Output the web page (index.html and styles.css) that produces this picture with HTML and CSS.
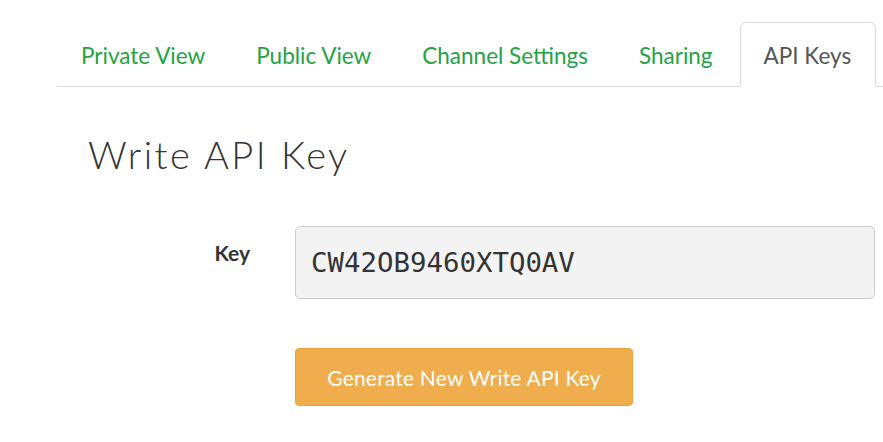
FILE: index.html
```html
<!DOCTYPE html>
<html>
<head>
<meta charset="utf-8">
<link rel="stylesheet" href="styles.css">
</head>
<body>
<div class="page">
  <ul class="tabs">
    <li class="tab"><a href="#">Private View</a></li>
    <li class="tab"><a href="#">Public View</a></li>
    <li class="tab"><a href="#">Channel Settings</a></li>
    <li class="tab"><a href="#">Sharing</a></li>
    <li class="tab active"><a href="#">API Keys</a></li>
  </ul>
  <div class="content">
    <h1 class="title">Write API Key</h1>
    <div class="row">
      <label class="label">Key</label>
      <div class="field">CW42OB9460XTQ0AV</div>
    </div>
    <div class="actions">
      <button class="btn">Generate New Write API Key</button>
    </div>
  </div>
</div>
</body>
</html>
```
FILE: styles.css
```css
html, body {
  margin: 0;
  padding: 0;
  background: #fff;
}
body {
  font-family: "Lato", "Noto Sans", sans-serif;
  color: #333;
}
.page {
  padding: 22px 0 0 57px;
}
.tabs {
  list-style: none;
  margin: 0;
  padding: 0;
  display: flex;
  border-bottom: 1px solid #ddd;
}
.tab {
  margin-right: 2px;
  margin-bottom: -1px;
}
.tab a {
  display: block;
  padding: 17px 24px 15px 23px;
  line-height: 31px;
  font-size: 22.5px;
  color: #24a345;
  text-decoration: none;
  border: 1px solid transparent;
  border-radius: 6px 6px 0 0;
}
.tab.active a {
  color: #555;
  background: #fff;
  border-color: #ddd #ddd transparent #ddd;
}
.content {
  padding-left: 31px;
}
.title {
  margin: 43px 0 0 0;
  font-weight: 300;
  font-size: 38px;
  letter-spacing: 2.5px;
  line-height: 48px;
  color: #333;
}
.row {
  display: flex;
  align-items: flex-start;
  margin-top: 48px;
}
.label {
  width: 162px;
  text-align: right;
  font-weight: bold;
  font-size: 21px;
  padding-top: 14px;
  margin-right: 45px;
}
.field {
  flex: 1;
  box-sizing: border-box;
  height: 73px;
  border: 1px solid #ccc;
  border-radius: 5px;
  background: #f3f3f3;
  font-family: "DejaVu Sans Mono", monospace;
  font-size: 27.4px;
  line-height: 71px;
  padding-left: 15px;
  color: #333;
  margin-right: 8px;
}
.actions {
  margin-top: 49px;
  padding-left: 207px;
}
.btn {
  background: #f0ad4e;
  border: 1px solid #eea236;
  border-radius: 4px;
  color: #fff;
  font-family: "Lato", sans-serif;
  font-size: 21px;
  letter-spacing: 0.2px;
  height: 58px;
  width: 338px;
  padding: 0;
}
```
